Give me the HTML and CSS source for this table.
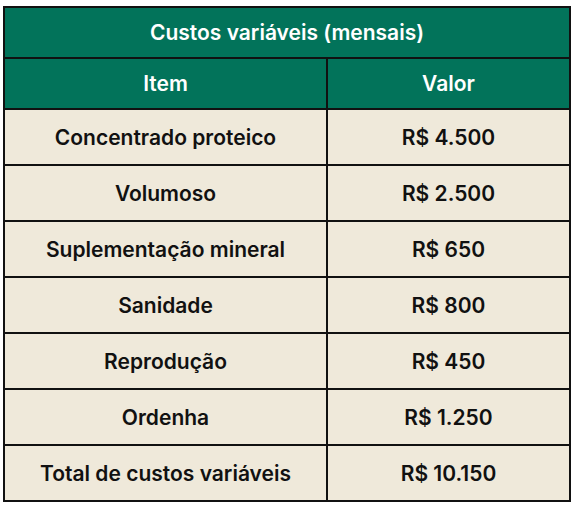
FILE: index.html
```html
<!DOCTYPE html>
<html lang="pt-BR">
<head>
<meta charset="utf-8">
<link rel="stylesheet" href="styles.css">
</head>
<body>
<table class="costs">
  <colgroup>
    <col class="col-item">
    <col class="col-value">
  </colgroup>
  <thead>
    <tr class="title-row"><th colspan="2">Custos variáveis (mensais)</th></tr>
    <tr class="head-row"><th>Item</th><th>Valor</th></tr>
  </thead>
  <tbody>
    <tr><td>Concentrado proteico</td><td>R$ 4.500</td></tr>
    <tr><td>Volumoso</td><td>R$ 2.500</td></tr>
    <tr><td>Suplementação mineral</td><td>R$ 650</td></tr>
    <tr><td>Sanidade</td><td>R$ 800</td></tr>
    <tr><td>Reprodução</td><td>R$ 450</td></tr>
    <tr><td>Ordenha</td><td>R$ 1.250</td></tr>
    <tr><td>Total de custos variáveis</td><td>R$ 10.150</td></tr>
  </tbody>
</table>
</body>
</html>
```
FILE: styles.css
```css
html, body {
  margin: 0;
  padding: 0;
  background: #ffffff;
}
body {
  padding: 6px 0 0 3px;
  font-family: Inter, "Liberation Sans", sans-serif;
}
.costs {
  border-collapse: collapse;
  width: 568px;
  table-layout: fixed;
  border: 2px solid #111111;
}
.col-item {
  width: 323px;
}
.costs th, .costs td {
  border: 2px solid #111111;
  text-align: center;
  padding: 0;
  font-weight: 600;
  font-size: 21px;
}
.costs th {
  background: #02735a;
  color: #ffffff;
  height: 49px;
}
.costs td {
  background: #efe9da;
  color: #111111;
  height: 54px;
}
```
